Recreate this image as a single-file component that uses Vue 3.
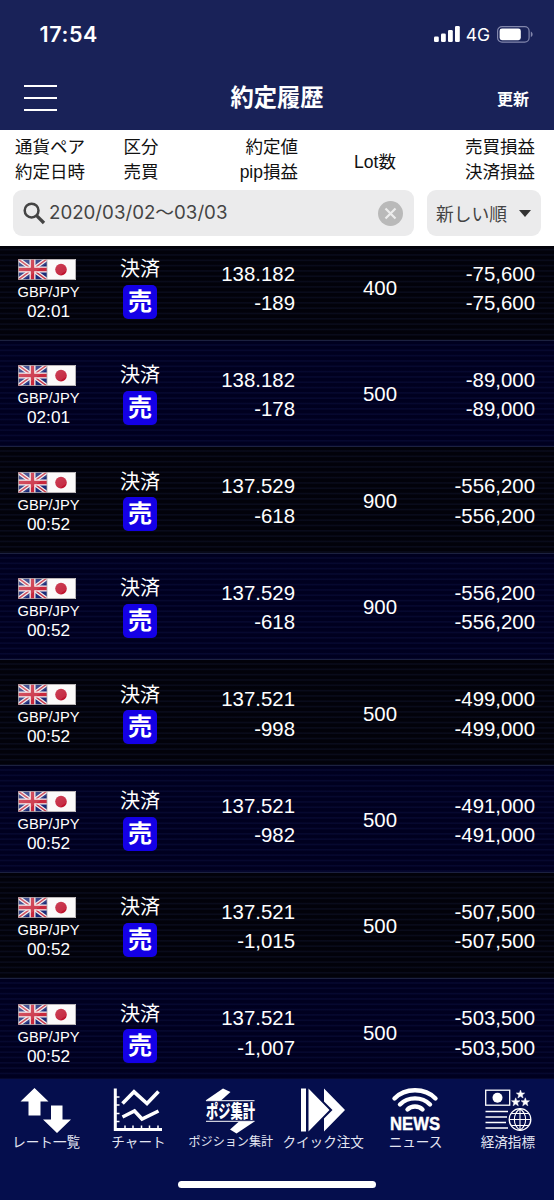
<script setup>
import { ref } from 'vue'

const keyword = ref('2020/03/02〜03/03')

const history = ref([
  { time: '02:01', price: '138.182', pip: '-189', lot: '400', profit: '-75,600' },
  { time: '02:01', price: '138.182', pip: '-178', lot: '500', profit: '-89,000' },
  { time: '00:52', price: '137.529', pip: '-618', lot: '900', profit: '-556,200' },
  { time: '00:52', price: '137.529', pip: '-618', lot: '900', profit: '-556,200' },
  { time: '00:52', price: '137.521', pip: '-998', lot: '500', profit: '-499,000' },
  { time: '00:52', price: '137.521', pip: '-982', lot: '500', profit: '-491,000' },
  { time: '00:52', price: '137.521', pip: '-1,015', lot: '500', profit: '-507,500' },
  { time: '00:52', price: '137.521', pip: '-1,007', lot: '500', profit: '-503,500' }
])
</script>

<template>
  <div class="app">
    <header class="header">
      <div class="status">
        <span class="status__time">17:54</span>
        <div class="status__right">
          <svg class="status__signal" width="26" height="17" viewBox="0 0 26 17" fill="#fff">
            <rect x="0" y="10.5" width="4.8" height="5.5" rx="1.3" />
            <rect x="7" y="7.5" width="4.8" height="8.5" rx="1.3" />
            <rect x="14" y="4" width="4.8" height="12" rx="1.3" />
            <rect x="21" y="0" width="4.8" height="16" rx="1.3" />
          </svg>
          <span class="status__net">4G</span>
          <svg width="37" height="17" viewBox="0 0 37 17">
            <rect x="0.6" y="0.6" width="31.5" height="15.6" rx="4.4" fill="none" stroke="#8287ac" stroke-width="1.2" />
            <rect x="2.6" y="2.6" width="21.2" height="11.6" rx="2.4" fill="#fff" />
            <path d="M33.8 5.6v5.6c2.4-1 2.4-4.6 0-5.6z" fill="#8287ac" />
          </svg>
        </div>
      </div>
      <div class="titlebar">
        <div class="titlebar__menu"><i></i><i></i><i></i></div>
        <h1 class="titlebar__title">約定履歴</h1>
        <div class="titlebar__refresh">更新</div>
      </div>
    </header>

    <section class="filter">
      <div class="columns">
        <div class="columns__pair">通貨ペア<br />約定日時</div>
        <div class="columns__kind">区分<br />売買</div>
        <div class="columns__price">約定値<br />pip損益</div>
        <div class="columns__lot">Lot数</div>
        <div class="columns__profit">売買損益<br />決済損益</div>
      </div>
      <div class="filter__bar">
        <div class="search">
          <svg width="23" height="23" viewBox="0 0 23 23" fill="none" stroke="#444">
            <circle cx="8.6" cy="8.6" r="6.9" stroke-width="2.5" />
            <path d="M13.6 13.6L21 21" stroke-width="3.3" />
          </svg>
          <span class="search__text">{{ keyword }}</span>
          <svg class="search__clear" width="25" height="25" viewBox="0 0 25 25" @click="keyword = ''">
            <circle cx="12.5" cy="12.5" r="12.5" fill="#b9b9b9" />
            <path d="M7.5 7.5l10 10M17.5 7.5l-10 10" stroke="#ececec" stroke-width="2.2" />
          </svg>
        </div>
        <div class="sort">
          <span>新しい順</span>
          <i class="sort__arrow"></i>
        </div>
      </div>
    </section>

    <main class="list">
      <div v-for="(item, i) in history" :key="i" class="row">
        <div class="row__pair">
          <svg class="row__flags" width="58" height="21" viewBox="0 0 58 21">
            <defs>
              <linearGradient id="shine" x1="0" y1="0" x2="1" y2="1">
                <stop offset="0" stop-color="#fff" stop-opacity="0.25" />
                <stop offset="0.6" stop-color="#fff" stop-opacity="0.1" />
                <stop offset="0.61" stop-color="#fff" stop-opacity="0" />
              </linearGradient>
            </defs>
            <rect width="29" height="21" fill="#1a2a78" />
            <path d="M0 0L29 21M29 0L0 21" stroke="#f2eeee" stroke-width="4" />
            <path d="M0 0L29 21M29 0L0 21" stroke="#c8384a" stroke-width="1.5" />
            <path d="M14.5 0V21M0 10.5H29" stroke="#f5f0f0" stroke-width="6" />
            <path d="M14.5 0V21M0 10.5H29" stroke="#c8283c" stroke-width="3.4" />
            <rect x="29" width="29" height="21" fill="#fbf9f9" />
            <circle cx="43" cy="10.6" r="5.8" fill="#c0142f" />
            <rect width="29" height="21" fill="url(#shine)" />
            <rect x="29" width="29" height="21" fill="url(#shine)" />
            <path d="M0.5 0.5H57.5V20.5H0.5zM29 0V21" fill="none" stroke="#a9a4a6" stroke-opacity="0.8" />
          </svg>
          <div class="row__name">GBP/JPY</div>
          <div class="row__time">{{ item.time }}</div>
        </div>
        <div class="row__kind">
          <div>決済</div>
          <span class="row__badge">売</span>
        </div>
        <div class="row__price">{{ item.price }}<br />{{ item.pip }}</div>
        <div class="row__lot">{{ item.lot }}</div>
        <div class="row__profit">{{ item.profit }}<br />{{ item.profit }}</div>
      </div>
    </main>

    <nav class="nav">
      <div class="nav__item">
        <svg width="52" height="46" viewBox="0 0 52 46" fill="#fff">
          <path d="M14.5 0L28.5 13.5H20.5V27.5H8.5V13.5H0.5z" />
          <path d="M31 17.5H42.5V31.5H51L37 45L23 31.5H31z" />
        </svg>
        <span>レート一覧</span>
      </div>
      <div class="nav__item">
        <svg width="50" height="46" viewBox="0 0 50 46" fill="none" stroke="#fff">
          <path d="M2.3 0.5V41.5H49" stroke-width="3" />
          <path d="M3 9H6.5M3 17H6.5M3 25.5H6.5M3 33.5H6.5M12 41V37.5M20 41V37.5M28.5 41V37.5M36.5 41V37.5M45 41V37.5" stroke-width="1.5" />
          <path d="M9.5 15.5L21 3.8L34 15.5L45.5 3.5" stroke-width="3.6" />
          <path d="M9.5 29L21.5 23L29 31L45.5 23" stroke-width="3.6" />
        </svg>
        <span>チャート</span>
      </div>
      <div class="nav__item nav__item--position">
        <svg width="52" height="46" viewBox="0 0 52 46" fill="#fff">
          <path d="M18 0.5L25.5 4L16 12.5H0.5z" />
          <path d="M34 33.5H49.5L31.5 45.5L25 41.5z" />
          <path d="M1 12.7H49.5M1 33.3H49.5" stroke="#fff" stroke-width="1" />
          <text class="nav__mark" x="1" y="29.7" textLength="49" lengthAdjust="spacingAndGlyphs">ポジ集計</text>
        </svg>
        <span>ポジション集計</span>
      </div>
      <div class="nav__item">
        <svg width="46" height="46" viewBox="0 0 46 46" fill="#fff">
          <path d="M1 0.5H6V43.5H1zM8.5 0.5L29.5 22L8.5 43.5z" />
          <path d="M24 0.5L45 22L24 43.5V30.5L32.5 22L24 13.5z" />
        </svg>
        <span>クイック注文</span>
      </div>
      <div class="nav__item">
        <svg width="52" height="46" viewBox="0 0 52 46" fill="none" stroke="#fff" stroke-linecap="round">
          <path d="M5.5 10.5C16 -0.5 36 -0.5 46.5 10.5" stroke-width="4.4" />
          <path d="M11 16.5C19 8.3 33 8.3 41 16.5" stroke-width="4.4" />
          <path d="M18.5 21.5C22.5 17.5 29.5 17.5 33.5 21.5" stroke-width="4.4" />
          <text class="nav__news" x="1" y="41.8" textLength="50" lengthAdjust="spacingAndGlyphs">NEWS</text>
        </svg>
        <span>ニュース</span>
      </div>
      <div class="nav__item">
        <svg width="48" height="46" viewBox="0 0 48 46" fill="none" stroke="#fff">
          <rect x="1.7" y="2.2" width="24" height="15" stroke-width="1.3" />
          <circle cx="13.5" cy="9.8" r="5" fill="#fff" stroke="none" />
          <path d="M1.5 23.5H24M1.5 29H23M1.5 34.5H22M1.5 40H24" stroke-width="1.5" />
          <g fill="#fff" stroke="#fff" stroke-width="0.5">
            <path id="star" d="M36.5 2l1.1 2.9 3.1.1-2.4 2 .8 3-2.6-1.7-2.6 1.7.8-3-2.4-2 3.1-.1z" />
            <use href="#star" x="-4.8" y="7.8" />
            <use href="#star" x="4.8" y="7.8" />
          </g>
          <circle cx="36" cy="31.5" r="10.8" stroke-width="1.3" />
          <path d="M36 20.7V42.3M25.2 31.5H46.8M27.5 25.5H44.5M27.5 37.5H44.5M36 20.7C28.5 26 28.5 37 36 42.3M36 20.7C43.5 26 43.5 37 36 42.3" stroke-width="1.1" />
        </svg>
        <span>経済指標</span>
      </div>
    </nav>
    <div class="home"><i></i></div>
  </div>
</template>

<style>
body {
  margin: 0;
  background: #050e4d;
}
</style>

<style scoped>
.app {
  width: 554px;
  height: 1200px;
  display: flex;
  flex-direction: column;
  overflow: hidden;
  background: #050e4d;
  font-family: 'Liberation Sans', 'Noto Sans CJK JP', sans-serif;
}

.header {
  flex: none;
  height: 130px;
  background: #192258;
  color: white;
}

.status {
  display: flex;
  justify-content: space-between;
  align-items: center;
  height: 69px;
  padding: 0 20px 0 39.5px;
}

.status__time {
  font: 600 21.5px/1 Inter, sans-serif;
  letter-spacing: 0.6px;
}

.status__right {
  display: flex;
  align-items: center;
}

.status__net {
  font: 400 17.5px/1 Inter, sans-serif;
  margin: 0 7px 0 6px;
}

.titlebar {
  display: grid;
  grid-template-columns: 120px 1fr 120px;
  align-items: center;
  height: 58px;
}

.titlebar__menu {
  display: flex;
  flex-direction: column;
  gap: 10px;
  width: 33px;
  margin-left: 23.5px;
}

.titlebar__menu i {
  height: 2px;
  background: white;
}

.titlebar__title {
  margin: 0;
  text-align: center;
  font-size: 23.3px;
  font-weight: 700;
  line-height: 30px;
}

.titlebar__refresh {
  padding-right: 25px;
  text-align: right;
  font-size: 16px;
  font-weight: 700;
}

.filter {
  flex: none;
  box-sizing: border-box;
  height: 115.5px;
  padding-top: 5px;
  background: white;
  color: #111;
}

.columns,
.row {
  display: grid;
  grid-template-columns: 97px 88px 110px 145px 95px;
}

.columns {
  height: 55px;
  font-size: 17.5px;
  line-height: 25px;
}

.columns__pair {
  padding-left: 15px;
}

.columns__kind {
  text-align: center;
}

.columns__price {
  margin-right: -3px;
  text-align: right;
}

.columns__lot {
  padding: 15px 0 0 15px;
  text-align: center;
}

.columns__profit {
  text-align: right;
}

.filter__bar {
  display: flex;
  gap: 13px;
  padding: 0 13px;
  color: #444;
}

.search,
.sort {
  box-sizing: border-box;
  display: flex;
  align-items: center;
  height: 46px;
  border-radius: 9px;
  background: #ebebec;
}

.search {
  width: 401px;
  padding: 0 11px 0 10px;
}

.search__text {
  margin-left: 3px;
  font: 400 18.7px/24px Inter, 'Noto Sans CJK JP', sans-serif;
}

.search__clear {
  margin-left: auto;
}

.sort {
  width: 114px;
  padding: 0 10px 0 9px;
  justify-content: space-between;
  font-size: 17.8px;
}

.sort__arrow {
  border: 6px solid transparent;
  border-top: 7px solid #333;
  border-bottom: 0;
}

/* first row is partly scrolled under the filter panel */
.list {
  flex: none;
  height: 833.5px;
  overflow: hidden;
  background: #000010;
}

.row {
  box-sizing: border-box;
  height: 106.4px;
  border-top: 1px solid #1c2140;
  background: repeating-linear-gradient(#02020a 0 2.7px, #090b1b 3.7px 4.3px, #02020a 5.32px);
  color: white;
  font-size: 20.4px;
  line-height: 29.5px;
}

.row:first-child {
  margin-top: -12px;
}

.row:nth-child(even) {
  background: repeating-linear-gradient(#00001f 0 2.7px, #06082f 3.7px 4.3px, #00001f 5.32px);
}

.row__pair {
  display: flex;
  flex-direction: column;
  align-items: center;
  padding-top: 24.3px;
}

.row__flags {
  margin-right: 4px;
}

.row__name {
  margin-top: 2px;
  font-size: 14.7px;
  line-height: 20px;
}

.row__time {
  font-size: 17.2px;
  line-height: 18px;
}

.row__kind {
  display: flex;
  flex-direction: column;
  align-items: center;
  padding-top: 20.6px;
  padding-right: 2px;
  font-size: 20px;
}

.row__badge {
  width: 34px;
  height: 34px;
  border-radius: 5px;
  background: #1400e6;
  text-align: center;
  font-size: 24px;
  font-weight: 700;
  line-height: 33px;
}

.row__price,
.row__profit {
  padding-top: 25.1px;
  text-align: right;
}

.row__lot {
  padding: 39.6px 0 0 25px;
  text-align: center;
}

.nav {
  flex: none;
  display: grid;
  grid-template-columns: repeat(6, 1fr);
  height: 100px;
  color: #e4e6f2;
}

.nav__item {
  display: flex;
  flex-direction: column;
  align-items: center;
  padding-top: 9px;
  font-size: 13.6px;
  line-height: 17px;
  white-space: nowrap;
}

.nav__item--position {
  font-size: 12.1px;
}

.nav__item svg {
  overflow: visible;
}

.nav__mark {
  font: 900 18px 'Noto Sans CJK JP', sans-serif;
}

.nav__news {
  font: 700 18px 'Liberation Sans', sans-serif;
  stroke: white;
  stroke-width: 0.4px;
  fill: white;
}

.home {
  display: flex;
  justify-content: center;
}

.home i {
  width: 198px;
  height: 7px;
  margin-top: 2px;
  border-radius: 4px;
  background: white;
}
</style>
